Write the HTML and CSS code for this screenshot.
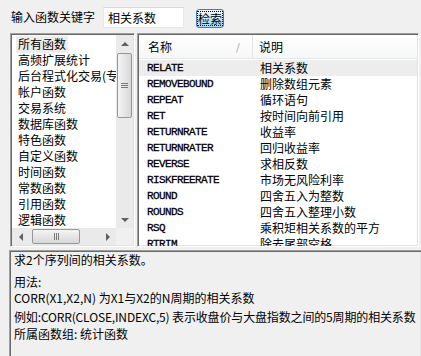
FILE: index.html
```html
<!DOCTYPE html>
<html lang="zh-CN">
<head>
    <meta charset="UTF-8">
    <meta name="viewport" content="width=device-width, initial-scale=1.0">
    <title>函数检索</title>
    <link rel="stylesheet" href="styles.css">
</head>
<body>
    <div class="search-bar">
        <label for="keyword">输入函数关键字</label>
        <input type="text" id="keyword" value="相关系数">
        <button class="search-btn"><span>检索</span></button>
    </div>

    <div class="lists">
        <div class="group-box">
            <ul class="group-list">
                <li class="selected"><span>所有函数</span></li>
                <li><span>高频扩展统计</span></li>
                <li><span>后台程式化交易(专业版)</span></li>
                <li><span>帐户函数</span></li>
                <li><span>交易系统</span></li>
                <li><span>数据库函数</span></li>
                <li><span>特色函数</span></li>
                <li><span>自定义函数</span></li>
                <li><span>时间函数</span></li>
                <li><span>常数函数</span></li>
                <li><span>引用函数</span></li>
                <li><span>逻辑函数</span></li>
            </ul>
            <div class="vscroll">
                <div class="arrow-btn"><i class="tri up"></i></div>
                <div class="track"><div class="thumb v"><b></b><b></b><b></b></div></div>
                <div class="arrow-btn"><i class="tri down"></i></div>
            </div>
            <div class="hscroll">
                <div class="arrow-btn"><i class="tri left"></i></div>
                <div class="track"><div class="thumb h"><b></b><b></b><b></b></div></div>
                <div class="arrow-btn"><i class="tri right"></i></div>
            </div>
            <div class="corner"></div>
        </div>

        <div class="func-box">
            <div class="func-head">
                <div class="col-name">名称<span class="sort">/</span></div>
                <div class="col-desc">说明</div>
            </div>
            <ul class="func-list">
                <li class="selected"><span class="fn">RELATE</span><span class="fd">相关系数</span></li>
                <li><span class="fn">REMOVEBOUND</span><span class="fd">删除数组元素</span></li>
                <li><span class="fn">REPEAT</span><span class="fd">循环语句</span></li>
                <li><span class="fn">RET</span><span class="fd">按时间向前引用</span></li>
                <li><span class="fn">RETURNRATE</span><span class="fd">收益率</span></li>
                <li><span class="fn">RETURNRATER</span><span class="fd">回归收益率</span></li>
                <li><span class="fn">REVERSE</span><span class="fd">求相反数</span></li>
                <li><span class="fn">RISKFREERATE</span><span class="fd">市场无风险利率</span></li>
                <li><span class="fn">ROUND</span><span class="fd">四舍五入为整数</span></li>
                <li><span class="fn">ROUNDS</span><span class="fd">四舍五入整理小数</span></li>
                <li><span class="fn">RSQ</span><span class="fd">乘积矩相关系数的平方</span></li>
                <li><span class="fn">RTRIM</span><span class="fd">除去尾部空格</span></li>
            </ul>
        </div>
    </div>

    <div class="desc">
        <p class="l1">求2个序列间的相关系数。</p>
        <p class="l2">用法:</p>
        <p class="l3">CORR(X1,X2,N) 为X1与X2的N周期的相关系数</p>
        <p class="l4">例如:CORR(CLOSE,INDEXC,5) 表示收盘价与大盘指数之间的5周期的相关系数</p>
        <p class="l5">所属函数组: 统计函数</p>
    </div>
</body>
</html>
```

FILE: styles.css
```css
* {
    box-sizing: border-box;
}
body {
    margin: 0;
    width: 421px;
    height: 356px;
    overflow: hidden;
    background-color: #f0f0f0;
    color: #000;
    font-family: "Noto Sans CJK SC", sans-serif;
    font-size: 12px;
}
ul {
    list-style: none;
    margin: 0;
    padding: 0;
}

/* top search row */
.search-bar {
    display: flex;
    align-items: flex-start;
    height: 33px;
    padding: 7px 0 0 11px;
}
.search-bar label {
    width: 84px;
    line-height: 20px;
    white-space: nowrap;
}
#keyword {
    width: 81px;
    height: 21px;
    margin: 0 0 0 8px;
    padding: 0 4px;
    border: 1px solid #e3e9ef;
    border-top-color: #d6dbe0;
    background-color: #fff;
    font: inherit;
    color: #000;
    outline: none;
}
.search-btn {
    width: 28px;
    height: 19px;
    margin: 2px 0 0 12px;
    padding: 0;
    border: 1px solid #3c7fb1;
    border-radius: 3px;
    background: linear-gradient(#eaf6fd 0%, #d9f0fc 50%, #bee6fd 51%, #a7d9f5 100%);
    font: inherit;
    color: #000;
    display: flex;
    align-items: center;
    justify-content: center;
}
.search-btn span {
    border: 1px dotted #000;
    line-height: 13px;
}

/* shared sunken frame */
.group-box,
.func-box,
.desc {
    border: 1px solid;
    border-color: #a0a0a0 #fff #fff #a0a0a0;
    box-shadow: inset 1px 1px 0 #696969, inset -1px -1px 0 #e3e3e3;
}

.lists {
    display: flex;
    gap: 2px;
    height: 214px;
    margin-left: 10px;
}

/* left group list */
.group-box {
    width: 125px;
    padding: 1px;
    background-color: #fff;
    display: grid;
    grid-template-columns: 1fr 17px;
    grid-template-rows: 1fr 17px;
}
.group-list {
    padding: 1px 0 0 4px;
    overflow: hidden;
}
.group-list li {
    height: 16px;
    line-height: 16px;
    white-space: nowrap;
}
.group-list li span {
    padding: 0 2px;
}
.group-list li.selected span {
    display: inline-block;
    background-color: #ececec;
    height: 17px;
}

.vscroll,
.hscroll {
    display: flex;
    background-color: #eaeaea;
}
.vscroll {
    flex-direction: column;
}
.arrow-btn {
    width: 17px;
    height: 17px;
    flex: none;
    display: flex;
    align-items: center;
    justify-content: center;
}
.track {
    flex: 1;
    display: flex;
}
.vscroll .track {
    flex-direction: column;
}
.corner {
    background-color: #f0f0f0;
}
.tri {
    width: 0;
    height: 0;
    border: 4px solid transparent;
}
.tri.up {
    border-bottom: 4px solid #606060;
    border-top-width: 0;
}
.tri.down {
    border-top: 4px solid #606060;
    border-bottom-width: 0;
}
.tri.left {
    border-right: 4px solid #606060;
    border-left-width: 0;
}
.tri.right {
    border-left: 4px solid #606060;
    border-right-width: 0;
}
.thumb {
    border: 1px solid #979797;
    border-radius: 2px;
    display: flex;
    align-items: center;
    justify-content: center;
    gap: 1px;
}
.thumb.v {
    height: 65px;
    margin: 1px 1px 0;
    flex-direction: column;
    background: linear-gradient(to right, #f4f4f4, #e6e6e6 50%, #d8d8d8);
}
.thumb.v b {
    width: 7px;
    height: 1px;
    background-color: #7a7a7a;
}
.thumb.h {
    width: 48px;
    margin: 1px 0 1px 3px;
    background: linear-gradient(#f4f4f4, #e6e6e6 50%, #d8d8d8);
}
.thumb.h b {
    width: 1px;
    height: 7px;
    background-color: #7a7a7a;
}

/* right function list */
.func-box {
    width: 282px;
    padding: 1px;
    background-color: #fff;
    overflow: hidden;
}
.func-head {
    display: flex;
    height: 24px;
    line-height: 23px;
    border-bottom: 1px solid #e5e5e5;
    background: linear-gradient(#fff, #f6f7f8);
}
.col-name {
    width: 114px;
    padding: 0 12px 0 9px;
    border-right: 1px solid #e5e5e5;
    display: flex;
    justify-content: space-between;
}
.sort {
    color: #9a9a9a;
    font-size: 10px;
}
.col-desc {
    padding-left: 6px;
}
.func-list {
    padding-top: 1px;
}
.func-list li {
    display: flex;
    height: 16px;
    line-height: 16px;
    white-space: nowrap;
}
.func-list li.selected {
    background-color: #ededed;
}
.fn {
    width: 114px;
    padding-left: 8px;
    font-family: "Liberation Mono", monospace;
    font-size: 11px;
    letter-spacing: -0.6px;
    -webkit-text-stroke: 0.3px #000;
}
.fd {
    padding-left: 7px;
}

/* description panel */
.desc {
    margin: 3px 0 0 9px;
    height: 120px;
    padding: 3px 0 0 4px;
    border-right: none;
    border-bottom: none;
    white-space: nowrap;
}
.desc p {
    margin: 0;
    height: 12px;
    line-height: 12px;
}
.desc .l2 {
    margin-top: 10px;
}
.desc .l3 {
    margin-top: 4px;
}
.desc .l4 {
    margin-top: 7px;
    letter-spacing: -0.15px;
}
.desc .l5 {
    margin-top: 5px;
}
```
